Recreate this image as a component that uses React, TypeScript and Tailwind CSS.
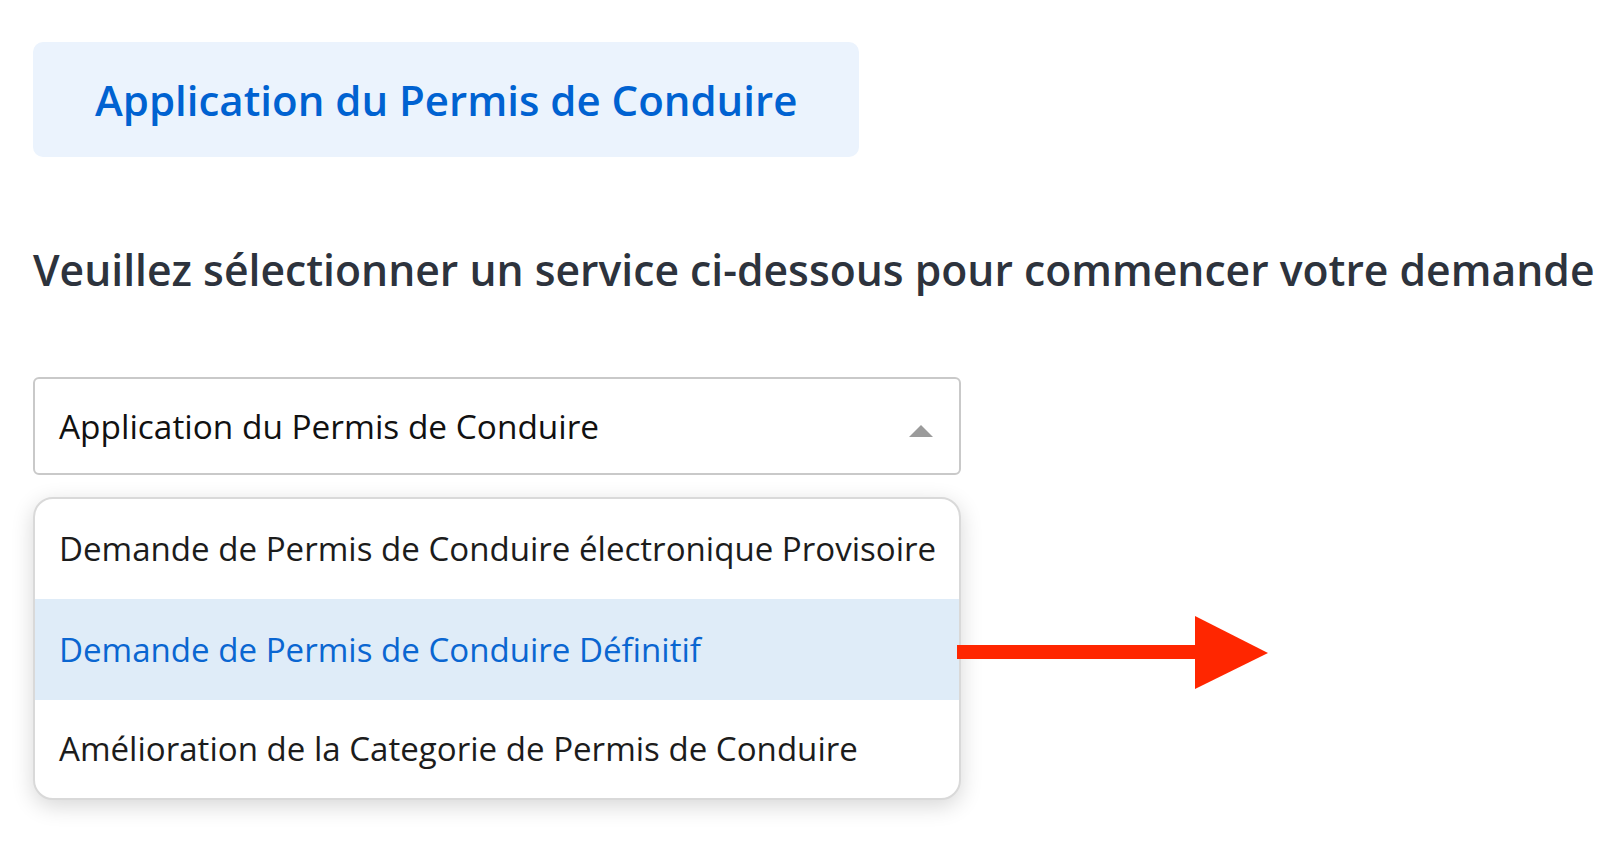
import React from "react";

export default function App() {
  const font = { fontFamily: "'Open Sans', Lato, sans-serif" };
  return (
    <div className="relative min-h-[867px] w-[1598px] bg-white overflow-hidden" style={font}>
      <div className="pl-[33px] pt-[42px]">
        <div className="flex h-[115px] w-[826px] items-center rounded-[10px] bg-[#ebf3fd] pl-[62px]">
          <span className="text-[42px] font-semibold leading-none text-[#0062d1]">Application du Permis de Conduire</span>
        </div>
        <h2 className="mt-[90px] text-[42.7px] font-semibold leading-[46px] text-[#2d333d] whitespace-nowrap">
          Veuillez sélectionner un service ci-dessous pour commencer votre demande
        </h2>
        <div className="mt-[84px] flex h-[98px] w-[928px] items-center justify-between rounded-[6px] border-2 border-[#c9c9c9] pl-[24px] pr-[26px]">
          <span className="text-[33.4px] text-[#111]">Application du Permis de Conduire</span>
          <svg width="24" height="12" viewBox="0 0 24 12" className="mt-[10px]">
            <polygon points="12,0 24,12 0,12" fill="#9b9b9b" />
          </svg>
        </div>
        <div className="mt-[22px] w-[928px] overflow-hidden rounded-[20px] border-2 border-[#d9d9d9] bg-white shadow-[0_6px_22px_rgba(0,0,0,0.16)]">
          <div className="flex h-[100px] items-center pl-[24px] text-[33.1px] text-[#1c1c1c]">
            Demande de Permis de Conduire électronique Provisoire
          </div>
          <div className="flex h-[101px] items-center bg-[#dfecf8] pl-[24px] text-[33.1px] text-[#0a66d1]">
            Demande de Permis de Conduire Définitif
          </div>
          <div className="flex h-[98px] items-center pl-[24px] text-[33.1px] text-[#1c1c1c]">
            Amélioration de la Categorie de Permis de Conduire
          </div>
        </div>
      </div>
      <svg className="absolute left-[957px] top-[616px]" width="312" height="74" viewBox="0 0 312 74">
        <rect x="0" y="29" width="240" height="14" fill="#ff2600" />
        <polygon points="238,0 311,37 238,73" fill="#ff2600" />
      </svg>
    </div>
  );
}
